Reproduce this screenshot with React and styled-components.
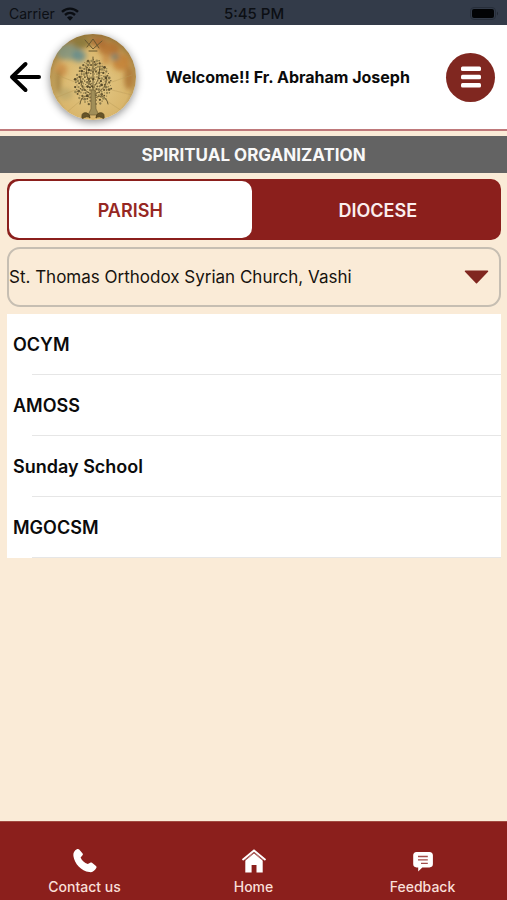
import React, { useState } from "react";
import styled, { createGlobalStyle } from "styled-components";

const colors = {
  cream: "#faebd7",
  red: "#8b1f1c",
  iconRed: "#802720",
  status: "#333b49",
  gray: "#636363",
};

const GlobalStyle = createGlobalStyle`
  *, *::before, *::after { box-sizing: border-box; }
  body {
    margin: 0;
    background: ${colors.cream};
    font-family: Inter, "Liberation Sans", sans-serif;
    color: #0b0b0b;
  }
  button, select { font: inherit; color: inherit; }
`;

const Screen = styled.div`
  min-height: 100vh;
  display: flex;
  flex-direction: column;
`;

const StatusBar = styled.div`
  height: 25px;
  padding: 2px 8px 0 9px;
  display: grid;
  grid-template-columns: 1fr auto 1fr;
  align-items: center;
  background: ${colors.status};
  color: #0c0f14;
  font-size: 14px;
  line-height: 20px;
`;

const Carrier = styled.span`
  display: flex;
  align-items: center;
  gap: 6px;
`;

const Clock = styled.time`
  font-size: 15px;
  font-weight: 500;
`;

const Battery = styled.svg`
  justify-self: end;
`;

const Header = styled.header`
  height: 106px;
  padding: 0 12px 0 9px;
  display: flex;
  align-items: center;
  background: #fff;
  border-bottom: 2px solid #bf797b;
`;

const BackButton = styled.button`
  display: flex;
  padding: 0;
  border: 0;
  background: none;
  cursor: pointer;
`;

const Avatar = styled.svg`
  flex: none;
  margin-left: 9px;
  border-radius: 50%;
  box-shadow: 0 2px 8px rgba(0, 0, 0, 0.45);
`;

const Welcome = styled.h1`
  flex: 1;
  margin: 0;
  padding-right: 6px;
  text-align: center;
  font-size: 16px;
  line-height: 20px;
  font-weight: 700;
`;

const MenuButton = styled.button`
  width: 49px;
  height: 49px;
  flex: none;
  padding: 0;
  display: grid;
  place-items: center;
  border: 0;
  border-radius: 50%;
  background: ${colors.iconRed};
  cursor: pointer;
`;

const TitleBar = styled.h2`
  margin: 5px 0 0;
  height: 37px;
  line-height: 38px;
  background: ${colors.gray};
  color: #f8f8f8;
  text-align: center;
  font-size: 17px;
  font-weight: 700;
`;

const Content = styled.main`
  flex: 1;
  padding: 6px 6px 7px 7px;
  display: flex;
  flex-direction: column;
  gap: 7px;
`;

const Tabs = styled.div`
  height: 61px;
  padding: 2px;
  display: grid;
  grid-template-columns: 1fr 1fr;
  gap: 5px;
  border-radius: 10px;
  background: ${colors.red};
`;

const Tab = styled.button`
  padding: 2px 0 0;
  border: 0;
  border-radius: 10px;
  background: ${(p) => (p.$active ? "#fff" : "transparent")};
  color: ${(p) => (p.$active ? "#962723" : "#fbeeee")};
  font-size: 18px;
  font-weight: 600;
  cursor: pointer;
`;

const SelectBox = styled.div`
  display: grid;
  align-items: center;

  > * { grid-area: 1 / 1; }
`;

const ChurchSelect = styled.select`
  width: 100%;
  height: 60px;
  padding: 0 44px 0 0;
  appearance: none;
  border: 2px solid #c6beb2;
  border-radius: 13px;
  background: transparent;
  color: #17130e;
  font-size: 17px;
  cursor: pointer;
`;

const Caret = styled.svg`
  justify-self: end;
  margin-right: 12px;
  pointer-events: none;
`;

const List = styled.ul`
  margin: 0;
  padding: 0;
  list-style: none;
  background: #fff;
`;

const Row = styled.li`
  padding: 2px 0 0 6px;
  font-size: 18px;
  line-height: 58px;
  font-weight: 600;

  &::after {
    content: "";
    display: block;
    height: 1px;
    margin-left: 19px;
    background: #e6e6e6;
  }
`;

const Footer = styled.nav`
  height: 79px;
  padding-top: 26px;
  display: grid;
  grid-template-columns: repeat(3, 1fr);
  background: ${colors.red};
  border-top: 1px solid #a14a40;
`;

const FooterLink = styled.a`
  display: flex;
  flex-direction: column;
  align-items: center;
  gap: 3px;
  color: #f9dfd8;
  font-size: 14px;
  line-height: 20px;
  font-weight: 500;
  text-decoration: none;
`;

const leaves = Array.from({ length: 190 }, (_, i) => {
  const angle = i * 2.4;
  const spread = Math.sqrt((i + 1) / 190);
  const y = 48 + Math.sin(angle) * spread * 23;
  return {
    x: 43 + Math.cos(angle) * spread * (16 + (y - 23) * 0.1),
    y,
    r: 0.5 + ((i * 7) % 5) * 0.22,
    tone: ["#6b5c34", "#86764a", "#574a29", "#998853"][i % 4],
  };
});

const patches = [
  [18, 18, 12, 8, "#7d9585"], [29, 22, 7, 6, "#5f8a8d"], [31, 9, 9, 6, "#85743a"],
  [59, 15, 11, 7, "#b06c2a"], [71, 28, 9, 9, "#c07a30"], [65, 23, 4, 3, "#667f76"],
  [11, 36, 6, 7, "#c98b43"], [48, 8, 8, 5, "#a96830"], [79, 44, 5, 12, "#a9702f"],
  [15, 60, 8, 6, "#bda96a"], [8, 48, 3, 12, "#98793b"], [56, 26, 4, 5, "#c78a42"],
];

function AvatarPicture() {
  return (
    <Avatar width="86" height="86" viewBox="0 0 86 86" role="img" aria-label="Tree of life">
      <defs>
        <radialGradient id="gold" cx="50%" cy="58%" r="60%">
          <stop offset="0" stopColor="#e4ca88" />
          <stop offset="0.7" stopColor="#d9b66c" />
          <stop offset="1" stopColor="#8d6c32" />
        </radialGradient>
        <filter id="soft"><feGaussianBlur stdDeviation="2.5" /></filter>
      </defs>
      <rect width="86" height="86" fill="url(#gold)" />
      <g filter="url(#soft)">
        {patches.map(([cx, cy, rx, ry, fill], i) => (
          <ellipse key={i} cx={cx} cy={cy} rx={rx} ry={ry} fill={fill} opacity="0.8" />
        ))}
      </g>
      <g stroke="#bb9c59" strokeWidth="0.6" opacity="0.7">
        <path d="M25 48 4 40M25 56 5 64M62 48 82 41M62 56 82 61M30 67 16 79M57 67 72 77" />
      </g>
      <g fill="none" stroke="#67572f" strokeLinecap="round">
        <path strokeWidth="1" d="M43 61C34 57 29 51 31 42M43 61C53 57 58 51 56 42M43 54C36 46 37 39 36 32M43 54C50 46 49 39 50 32M43 60V23M41 64C35 60 31 63 30 70M45 64C51 60 57 63 58 70" />
        <path strokeWidth="1" d="M35 6 43 15 52 7M37 13 43 5 49 14M39 17H47" />
      </g>
      {leaves.map((leaf, i) => (
        <circle key={i} cx={leaf.x.toFixed(1)} cy={leaf.y.toFixed(1)} r={leaf.r} fill={leaf.tone} />
      ))}
      <path d="M41 56h4l1 19 3 6H38l3-6z" fill="#a08e58" stroke="#756337" strokeWidth="0.7" />
      <path d="M32 82q0-4 5-3 3 1 3 5-3-3-8 1zM54 82q0-4-5-3-3 1-3 5 3-3 8 1z" fill="#665429" stroke="#584821" />
    </Avatar>
  );
}

const PhoneIcon = () => (
  <svg width="26" height="26" viewBox="0 0 26 26" fill="#fff" aria-hidden="true">
    <path d="M5.200 1.100 5.200 1.100c.8-.4 1.500-.2 2 .4l3.400 4c.5.6.4 1.200-.1 1.800L8.600 9.500c1.300 3.200 3.900 5.500 7.200 6.600l2.400-1.400c.6-.4 1.200-.4 1.800.1l4 3.300c.6.5.7 1.200.3 1.900-1.700 3.100-4 4.500-7 4.100C9.200 22.900 2.400 15.600 1.400 7.900 1 5 2.200 2.800 5.200 1.100z" />
  </svg>
);

const HomeIcon = () => (
  <svg width="26" height="26" viewBox="0 0 26 26" fill="#fff" aria-hidden="true">
    <path d="m13 4.4 8.700 7.300V24.500h-6.200V17h-4.900v7.500H4.300V11.700z" />
    <path d="m2.100 11.400 10.900-9 10.900 9" fill="none" stroke="#fff" strokeWidth="2" strokeLinecap="round" strokeLinejoin="round" />
    <path d="m3.800 12.700 9.200-7.600 9.200 7.600" fill="none" stroke={colors.red} strokeWidth="0.7" />
  </svg>
);

const FeedbackIcon = () => (
  <svg width="26" height="26" viewBox="0 0 26 26" fill="#fff" aria-hidden="true">
    <path d="M6.500 3.900h13c2.200 0 3.400 1.300 3.400 3.400v8.800c0 2.100-1.200 3.300-3.400 3.300h-7.200L8.200 23.500v-4.100H6.500c-2.100 0-3.300-1.200-3.300-3.300V7.300c0-2.100 1.200-3.400 3.300-3.400z" />
    <path d="M8 8.500h9.800M8 11.900h9.800M11 15.300h6.800" stroke="#a24d4a" strokeWidth="1.3" />
  </svg>
);

const links = [
  ["Contact us", PhoneIcon],
  ["Home", HomeIcon],
  ["Feedback", FeedbackIcon],
];

export default function App() {
  const [tab, setTab] = useState("PARISH");
  return (
    <Screen>
      <GlobalStyle />
      <StatusBar>
        <Carrier>
          Carrier
          <svg width="18" height="14" viewBox="0 0 18 14" fill="none" stroke="#0a0d12" strokeWidth="2.4" aria-hidden="true">
            <path d="M1 4.8C5.5.5 12.5.5 17 4.8M4 8c3-2.7 7-2.7 10 0" />
            <path d="M9 13.8 6 10.5q3-2.4 6 0z" fill="#0a0d12" stroke="none" />
          </svg>
        </Carrier>
        <Clock>5:45 PM</Clock>
        <Battery width="29" height="13" viewBox="0 0 29 13" aria-hidden="true">
          <rect x="0.5" y="0.5" width="25" height="12" rx="3.5" fill="none" stroke="#272e3a" />
          <rect x="2" y="2" width="22" height="9" rx="2" fill="#020305" />
          <path d="M27 4.5q2 2 0 4z" fill="#202631" />
        </Battery>
      </StatusBar>
      <Header>
        <BackButton aria-label="Back">
          <svg width="32" height="32" viewBox="0 0 32 32" fill="none" stroke="#000" strokeWidth="4" strokeLinecap="round" strokeLinejoin="round" aria-hidden="true">
            <path d="M30 16H3M16.500 3 3 16l13.500 13" />
          </svg>
        </BackButton>
        <AvatarPicture />
        <Welcome>Welcome!! Fr. Abraham Joseph</Welcome>
        <MenuButton aria-label="Menu">
          <svg width="22" height="22" viewBox="0 0 22 22" fill="#fff" aria-hidden="true">
            <rect x="1" y="0.5" width="20" height="4.5" rx="1.5" />
            <rect x="1" y="8.7" width="20" height="4.5" rx="1.5" />
            <rect x="1" y="17" width="20" height="4.5" rx="1.5" />
          </svg>
        </MenuButton>
      </Header>
      <TitleBar>SPIRITUAL ORGANIZATION</TitleBar>
      <Content>
        <Tabs role="tablist">
          {["PARISH", "DIOCESE"].map((name) => (
            <Tab key={name} role="tab" aria-selected={tab === name} $active={tab === name} onClick={() => setTab(name)}>
              {name}
            </Tab>
          ))}
        </Tabs>
        <SelectBox>
          <ChurchSelect aria-label="Church">
            <option>St. Thomas Orthodox Syrian Church, Vashi</option>
          </ChurchSelect>
          <Caret width="25" height="14" viewBox="0 0 25 14" aria-hidden="true">
            <path d="M1.5 1.2h22L12.5 12.7z" fill={colors.iconRed} stroke={colors.iconRed} strokeWidth="1.5" strokeLinejoin="round" />
          </Caret>
        </SelectBox>
        <List>
          {["OCYM", "AMOSS", "Sunday School", "MGOCSM"].map((name) => (
            <Row key={name}>{name}</Row>
          ))}
        </List>
      </Content>
      <Footer>
        {links.map(([label, Icon]) => (
          <FooterLink key={label} href="#">
            <Icon />
            {label}
          </FooterLink>
        ))}
      </Footer>
    </Screen>
  );
}
